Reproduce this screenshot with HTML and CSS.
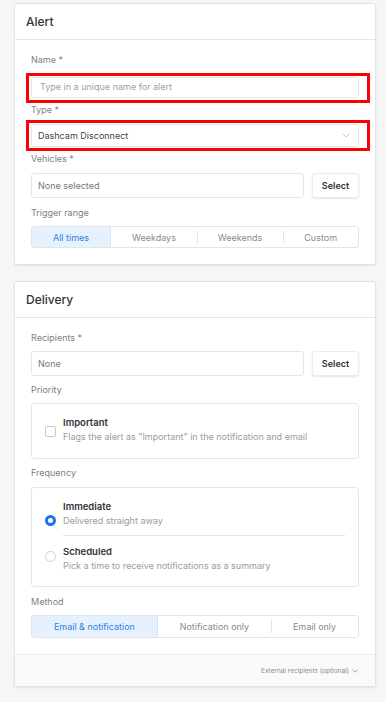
FILE: index.html
```html
<!DOCTYPE html>
<html>
<head>
<meta charset="utf-8">
<link rel="stylesheet" href="styles.css">
</head>
<body>
<div class="page">
  <section class="card">
    <div class="card-head">Alert</div>
    <div class="card-body">
      <div class="label">Name *</div>
      <div class="mark mark-name">
        <div class="input placeholder">Type in a unique name for alert</div>
      </div>
      <div class="label label-type">Type *</div>
      <div class="mark mark-type">
        <div class="input select-input">
          <span>Dashcam Disconnect</span>
          <svg class="chev" width="8" height="5" viewBox="0 0 8 5"><path d="M0.5 0.5 L4 4 L7.5 0.5" fill="none" stroke="#c4c4c4" stroke-width="0.9"/></svg>
        </div>
      </div>
      <div class="label label-vehicles">Vehicles *</div>
      <div class="row">
        <div class="input tall muted">None selected</div>
        <button class="btn">Select</button>
      </div>
      <div class="label">Trigger range</div>
      <div class="seg">
        <div class="seg-item active">All times</div>
        <div class="seg-item">Weekdays</div>
        <div class="seg-item div">Weekends</div>
        <div class="seg-item div">Custom</div>
      </div>
    </div>
  </section>

  <section class="card card2">
    <div class="card-head">Delivery</div>
    <div class="card-body">
      <div class="label">Recipients *</div>
      <div class="row row-recip">
        <div class="input tall muted">None</div>
        <button class="btn">Select</button>
      </div>
      <div class="label">Priority</div>
      <div class="box box-priority">
        <div class="opt">
          <span class="check"></span>
          <div class="opt-text">
            <div class="opt-title">Important</div>
            <div class="opt-desc">Flags the alert as "Important" in the notification and email</div>
          </div>
        </div>
      </div>
      <div class="label label-freq">Frequency</div>
      <div class="box box-freq">
        <div class="opt opt-first">
          <span class="radio on"></span>
          <div class="opt-text">
            <div class="opt-title">Immediate</div>
            <div class="opt-desc">Delivered straight away</div>
          </div>
        </div>
        <div class="sep"></div>
        <div class="opt">
          <span class="radio"></span>
          <div class="opt-text">
            <div class="opt-title">Scheduled</div>
            <div class="opt-desc">Pick a time to receive notifications as a summary</div>
          </div>
        </div>
      </div>
      <div class="label label-method">Method</div>
      <div class="seg seg-method">
        <div class="seg-item active">Email &amp; notification</div>
        <div class="seg-item">Notification only</div>
        <div class="seg-item div">Email only</div>
      </div>
    </div>
    <div class="card-foot">
      <span>External recipients (optional)</span>
      <svg width="6" height="4" viewBox="0 0 6 4"><path d="M0.5 0.8 L3 3.2 L5.5 0.8" fill="none" stroke="#888" stroke-width="0.8"/></svg>
    </div>
  </section>
</div>
</body>
</html>
```

FILE: styles.css
```css
* { box-sizing: border-box; }
html, body { margin: 0; padding: 0; }
body {
  background: #f6f6f6;
  font-family: Inter, "Noto Sans", sans-serif;
  color: #444;
  width: 386px;
  height: 702px;
  overflow: hidden;
}
.page {
  padding: 3px 10px 0 14px;
}
.card {
  background: #fff;
  border: 1px solid #e4e4e4;
  border-radius: 3px;
  box-shadow: 0 1px 2px rgba(0,0,0,0.08);
}
.card2 { margin-top: 16px; }
.card-head {
  height: 36px;
  display: flex;
  align-items: center;
  padding-left: 11px;
  font-size: 12px;
  font-weight: 500;
  color: #333;
  border-bottom: 1px solid #e6e6e6;
}
.card-body {
  padding: 14px 16px 16px 16px;
}
.label {
  font-size: 9px;
  line-height: 12px;
  color: #808080;
  margin-bottom: 7px;
}
.label-type { margin-top: 1px; margin-bottom: 4px; }
.label-vehicles { margin-top: 2px; margin-bottom: 8px; }
.label-freq { margin-bottom: 8px; }
.label-method { margin-top: 9px; margin-bottom: 7px; }
.mark {
  border: 3px solid #ff0000;
  margin: 0 -11px 0 -5px;
  padding: 1px 8px 1px 2px;
}
.mark-name { padding-bottom: 2px; }
.mark-name .input { height: 21px; padding-bottom: 2px; }
.mark-type .input { height: 23px; }
.input {
  height: 22px;
  border: 1px solid #e6e6e6;
  border-radius: 3px;
  background: #fff;
  font-size: 9px;
  display: flex;
  align-items: center;
  padding: 0 8px;
  color: #444;
}
.placeholder { color: #a0a0a0; }
.select-input {
  justify-content: space-between;
  padding-left: 6px;
  padding-right: 8px;
}
.row {
  display: flex;
  gap: 8px;
  margin-bottom: 9px;
}
.row-recip { margin-bottom: 8px; }
.input.tall { height: 25px; flex: 1; padding-left: 6px; }
.muted { color: #777; }
.btn {
  width: 47px;
  height: 25px;
  border: 1px solid #ececec;
  border-radius: 3px;
  background: #fff;
  box-shadow: 0 1px 2px rgba(0,0,0,0.1);
  font-family: Inter, sans-serif;
  font-size: 9px;
  font-weight: 600;
  color: #333;
  padding: 0;
}
.seg {
  display: flex;
  height: 22px;
  border: 1px solid #e4e4e4;
  border-radius: 3px;
  overflow: hidden;
}
.seg-method { height: 23px; }
.seg-item {
  flex: 1 1 auto;
  display: flex;
  align-items: center;
  justify-content: center;
  font-size: 9px;
  color: #8a8a8a;
  position: relative;
  white-space: nowrap;
}
.seg-item.active {
  background: #e5f2fe;
  color: #2f7fe0;
  border-right: 1px solid #d0e6fb;
}
.seg-item.div::before {
  content: "";
  position: absolute;
  left: 0;
  top: 4px;
  bottom: 4px;
  border-left: 1px solid #e4e4e4;
}
.box {
  border: 1px solid #e6e6e6;
  border-radius: 3px;
  padding: 0 13px;
  margin-bottom: 8px;
}
.box-priority { padding-top: 12px; padding-bottom: 13px; }
.box-freq { padding-top: 12px; padding-bottom: 12px; margin-bottom: 0; }
.opt {
  display: flex;
  align-items: center;
  gap: 7px;
}
.opt-text { display: flex; flex-direction: column; }
.opt-title {
  font-size: 9.5px;
  line-height: 13px;
  font-weight: 600;
  color: #333;
}
.opt-desc {
  font-size: 9px;
  line-height: 16px;
  color: #9c9c9c;
}
.check {
  width: 11px;
  height: 11px;
  border: 1px solid #c8c8c8;
  border-radius: 2px;
  flex: none;
  margin-top: 2px;
}
.radio {
  width: 11px;
  height: 11px;
  border: 1px solid #cfcfcf;
  border-radius: 50%;
  flex: none;
}
.opt-first .radio { margin-top: 12px; }
.radio.on { border: 3px solid #1a73e8; }
.sep {
  height: 1px;
  background: #e2e2e2;
  margin: 6px 0 9px 18px;
}
.box-freq .opt:last-child .radio { margin-top: -6px; }
.card-foot {
  height: 32px;
  background: #fafafa;
  border-top: 1px solid #ececec;
  display: flex;
  align-items: center;
  justify-content: flex-end;
  gap: 3px;
  padding-right: 17px;
  font-size: 6.5px;
  color: #8a8a8a;
}
```
